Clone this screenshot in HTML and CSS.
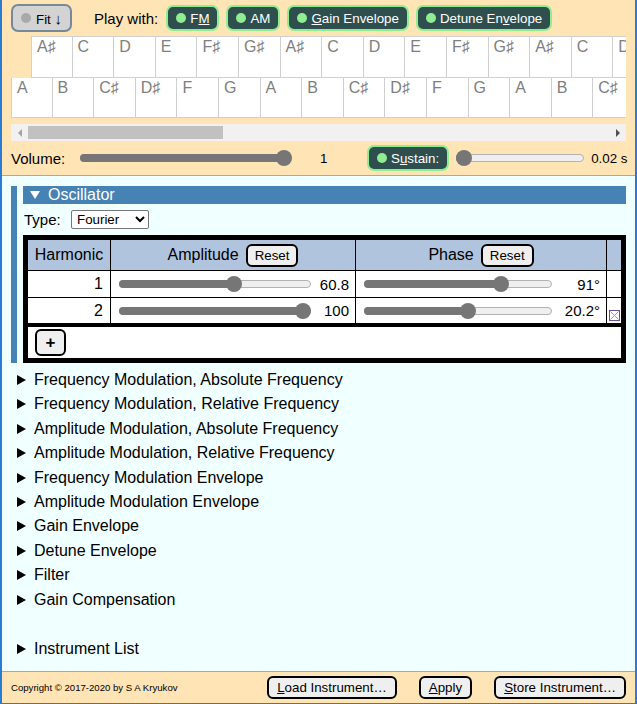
FILE: index.html
```html
<!DOCTYPE html>
<html lang="en">
<head>
<meta charset="utf-8">
<title>Synthesizer</title>
<link rel="stylesheet" href="styles.css">
</head>
<body>
<div class="app">
  <header class="top-panel">
    <div class="toolbar">
      <button class="btn-fit"><span class="led led-off"></span><span class="lbl">Fit <span class="arrow">↓</span></span></button>
      <span class="play-label">Play with:</span>
      <button class="toggle"><span class="led"></span><span class="lbl">F<u>M</u></span></button>
      <button class="toggle"><span class="led"></span><span class="lbl">AM</span></button>
      <button class="toggle"><span class="led"></span><span class="lbl"><u>G</u>ain Envelope</span></button>
      <button class="toggle"><span class="led"></span><span class="lbl">Detune En<u>v</u>elope</span></button>
    </div>
    <div class="keyboard">
      <div class="key-row row-upper">
        <div class="key">A♯</div><div class="key">C</div><div class="key">D</div><div class="key">E</div><div class="key">F♯</div><div class="key">G♯</div><div class="key">A♯</div><div class="key">C</div><div class="key">D</div><div class="key">E</div><div class="key">F♯</div><div class="key">G♯</div><div class="key">A♯</div><div class="key">C</div><div class="key">D</div><div class="key">E</div>
      </div>
      <div class="key-row row-lower">
        <div class="key">A</div><div class="key">B</div><div class="key">C♯</div><div class="key">D♯</div><div class="key">F</div><div class="key">G</div><div class="key">A</div><div class="key">B</div><div class="key">C♯</div><div class="key">D♯</div><div class="key">F</div><div class="key">G</div><div class="key">A</div><div class="key">B</div><div class="key">C♯</div><div class="key">D♯</div>
      </div>
    </div>
    <div class="hscroll">
      <span class="hs-btn"><span class="hs-arrow hs-left"></span></span>
      <div class="hs-track"><div class="hs-thumb"></div></div>
      <span class="hs-btn"><span class="hs-arrow hs-right"></span></span>
    </div>
    <div class="volume-row">
      <span class="vol-label">Volume:</span>
      <div class="slider vol-slider" style="--v:1"><div class="slider-fill"></div><div class="slider-thumb"></div></div>
      <span class="vol-value">1</span>
      <button class="toggle sustain"><span class="led"></span><span class="lbl">S<u>u</u>stain:</span></button>
      <div class="slider sus-slider" style="--v:0"><div class="slider-fill"></div><div class="slider-thumb"></div></div>
      <span class="sus-value">0.02 s</span>
    </div>
  </header>

  <main class="content">
    <details class="osc" open>
      <summary class="osc-summary"><span class="tri-down"></span>Oscillator</summary>
      <div class="type-row">
        <label class="type-label">Type:</label>
        <select class="type-select"><option>Fourier</option></select>
      </div>
      <div class="harm-table">
        <div class="cell head">Harmonic</div>
        <div class="cell head">Amplitude <button class="btn btn-reset">Reset</button></div>
        <div class="cell head">Phase <button class="btn btn-reset">Reset</button></div>
        <div class="cell head last-col"></div>

        <div class="cell row num">1</div>
        <div class="cell row ctl ctl-amp"><div class="slider" style="--v:0.608"><div class="slider-fill"></div><div class="slider-thumb"></div></div><span class="val">60.8</span></div>
        <div class="cell row ctl ctl-phase"><div class="slider" style="--v:0.7528"><div class="slider-fill"></div><div class="slider-thumb"></div></div><span class="val">91°</span></div>
        <div class="cell row last-col"></div>

        <div class="cell row row-last num">2</div>
        <div class="cell row row-last ctl ctl-amp"><div class="slider" style="--v:1"><div class="slider-fill"></div><div class="slider-thumb"></div></div><span class="val">100</span></div>
        <div class="cell row row-last ctl ctl-phase"><div class="slider" style="--v:0.5561"><div class="slider-fill"></div><div class="slider-thumb"></div></div><span class="val">20.2°</span></div>
        <div class="cell row row-last last-col del-cell"><svg class="del-icon" width="11" height="11" viewBox="0 0 11 11"><path d="M1.5 1.5 L9.5 9.5 M9.5 1.5 L1.5 9.5" stroke="#8a9cc4" stroke-width="1"/><rect x="0.5" y="0.5" width="10" height="10" fill="none" stroke="#6a4f9a" stroke-width="1"/></svg></div>

        <div class="cell foot"><button class="btn btn-add">+</button></div>
      </div>
    </details>

    <details class="item"><summary><span class="tri-right"></span>Frequency Modulation, Absolute Frequency</summary></details>
    <details class="item"><summary><span class="tri-right"></span>Frequency Modulation, Relative Frequency</summary></details>
    <details class="item"><summary><span class="tri-right"></span>Amplitude Modulation, Absolute Frequency</summary></details>
    <details class="item"><summary><span class="tri-right"></span>Amplitude Modulation, Relative Frequency</summary></details>
    <details class="item"><summary><span class="tri-right"></span>Frequency Modulation Envelope</summary></details>
    <details class="item"><summary><span class="tri-right"></span>Amplitude Modulation Envelope</summary></details>
    <details class="item"><summary><span class="tri-right"></span>Gain Envelope</summary></details>
    <details class="item"><summary><span class="tri-right"></span>Detune Envelope</summary></details>
    <details class="item"><summary><span class="tri-right"></span>Filter</summary></details>
    <details class="item"><summary><span class="tri-right"></span>Gain Compensation</summary></details>
    <details class="item item-spaced"><summary><span class="tri-right"></span>Instrument List</summary></details>
  </main>

  <footer class="bottom-panel">
    <span class="copyright">Copyright © 2017-2020 by S A Kryukov</span>
    <div class="footer-buttons">
      <button class="btn btn-foot"><u>L</u>oad Instrument…</button>
      <button class="btn btn-foot"><u>A</u>pply</button>
      <button class="btn btn-foot"><u>S</u>tore Instrument…</button>
    </div>
  </footer>
</div>
</body>
</html>
```

FILE: styles.css
```css
* { box-sizing: border-box; }

html, body {
  margin: 0;
  height: 100%;
}

body {
  font-family: "Liberation Sans", Arial, sans-serif;
  font-size: 16px;
  color: #000;
  background: #f0ffff;
  overflow: hidden;
}

.app {
  height: 704px;
  display: flex;
  flex-direction: column;
  border-left: 2px solid #2a7bd3;
  border-right: 2px solid #2a7bd3;
  border-bottom: 1px solid #2a7bd3;
}

/* ---------- top panel ---------- */
.top-panel {
  background: #ffe4b5;
  padding: 4px 9px 4px 9px;
  border-bottom: 1px solid #a8a8a8;
  flex: none;
}

button {
  font-family: inherit;
  font-size: 13.333px;
  color: inherit;
  cursor: pointer;
  white-space: nowrap;
}

.lbl { white-space: nowrap; }

.toolbar {
  display: flex;
  align-items: center;
  height: 28px;
}

.led {
  flex: none;
  width: 10px;
  height: 10px;
  border-radius: 50%;
  background: #90ee90;
}

.led-off { background: #a9a9a9; }

.btn-fit {
  flex: none;
  height: 28px;
  display: flex;
  align-items: center;
  gap: 5px;
  padding: 0 8px;
  background: #d3d3d3;
  border: 2px solid #778899;
  border-radius: 7px;
}

.btn-fit .arrow {
  font-size: 15px;
}

.play-label {
  flex: none;
  margin-left: 22px;
  margin-right: 8px;
  font-size: 15px;
}

.toggle {
  flex: none;
  height: 26px;
  display: flex;
  align-items: center;
  gap: 4px;
  padding: 0 8px;
  background: #2f4f4f;
  color: #fff;
  border: 2px solid #90ee90;
  border-radius: 7px;
  margin-right: 7px;
}

/* keyboard */
.keyboard {
  margin-top: 4px;
  overflow: hidden;
}

.key-row {
  display: flex;
}

.row-upper { padding-left: 20px; }

.key {
  flex: none;
  width: 41.6px;
  background: #fff;
  border-right: 1px solid #d0d0d0;
  border-bottom: 1px solid #d0d0d0;
  color: #808080;
  font-size: 16px;
  line-height: 18px;
  padding: 1px 5px;
  white-space: nowrap;
}

.key:first-child { border-left: 1px solid #d0d0d0; }

.row-upper .key {
  height: 42px;
  border-top: 1px solid #d0d0d0;
}

.row-lower .key { height: 40px; }

/* horizontal scrollbar */
.hscroll {
  margin-top: 6px;
  height: 17px;
  display: flex;
  background: #f1f1f1;
}

.hs-btn {
  flex: none;
  width: 17px;
  display: flex;
  align-items: center;
  justify-content: center;
}

.hs-arrow {
  width: 0;
  height: 0;
  border-top: 4px solid transparent;
  border-bottom: 4px solid transparent;
}

.hs-left { border-right: 4px solid #a3a3a3; }
.hs-right { border-left: 4px solid #505050; }

.hs-track {
  flex: 1;
  padding: 2px 0;
}

.hs-thumb {
  width: 195px;
  height: 13px;
  background: #c1c1c1;
}

/* volume row */
.volume-row {
  margin-top: 4px;
  height: 26px;
  display: flex;
  align-items: center;
  white-space: nowrap;
}

.volume-row > * { flex: none; }

.vol-label {
  width: 69px;
  font-size: 15px;
}

.vol-slider { width: 212px; }

.vol-value {
  width: 75px;
  padding-left: 28px;
  font-size: 13.333px;
}

.sustain { margin-right: 0; }

.sus-slider {
  width: 128px;
  margin-left: 7px;
}

.sus-value {
  margin-left: 7px;
  font-size: 13.333px;
}

/* slider */
.slider {
  position: relative;
  height: 8px;
  border-radius: 4px;
  background: #efefef;
  border: 1px solid #b2b2b2;
  flex: none;
}

.slider-fill {
  position: absolute;
  left: -1px;
  top: -1px;
  bottom: -1px;
  width: calc((100% - 14px) * var(--v) + 8px);
  background: #767676;
  border-radius: 4px;
}

.slider-thumb {
  position: absolute;
  top: 50%;
  width: 16px;
  height: 16px;
  margin-top: -8px;
  left: calc((100% - 14px) * var(--v) - 1px);
  border-radius: 50%;
  background: #767676;
}

/* ---------- content ---------- */
.content {
  flex: 1;
  padding: 10px 9px 0 9px;
  background: #f0ffff;
  overflow: hidden;
}

details > summary {
  display: block;
  list-style: none;
  cursor: pointer;
}

details > summary::-webkit-details-marker { display: none; }

.osc {
  border-left: 6px solid #4682b4;
  padding-left: 6px;
}

.osc-summary {
  background: #4682b4;
  color: #fff;
  height: 18px;
  line-height: 18px;
  padding-left: 7px;
}

.tri-down {
  display: inline-block;
  width: 0;
  height: 0;
  border-top: 8px solid #fff;
  border-left: 5px solid transparent;
  border-right: 5px solid transparent;
  margin-right: 8px;
  vertical-align: 1px;
}

.type-row {
  margin-top: 5px;
  height: 20px;
  display: flex;
  align-items: center;
  padding-left: 1px;
}

.type-label {
  font-size: 15px;
  width: 47px;
}

.type-select {
  width: 78px;
  height: 19px;
  font-family: inherit;
  font-size: 13.333px;
  background: #fff;
  border: 1px solid #767676;
  border-radius: 2px;
  padding: 0 1px;
}

/* harmonics table */
.harm-table {
  margin-top: 6px;
  display: grid;
  grid-template-columns: 83px 245px 251px 1fr;
  border: 5px solid #000;
  background: #fff;
}

.cell {
  display: flex;
  align-items: center;
  border-right: 1px solid #000;
  border-bottom: 1px solid #000;
  background: #fff;
}

.last-col { border-right: none; }

.head {
  height: 31px;
  background: #b0c4de;
  justify-content: center;
  gap: 7px;
}

.row { height: 27px; }

.row-last {
  height: 29px;
  border-bottom-width: 4px;
}

.num {
  justify-content: flex-end;
  padding-right: 7px;
}

.ctl { padding: 0 6px 0 8px; }

.ctl .slider { flex: 1; }

.val {
  flex: none;
  text-align: right;
  font-size: 15px;
}

.ctl-amp .val { width: 38px; }
.ctl-phase .val { width: 48px; }

.del-cell {
  justify-content: center;
  align-items: flex-end;
  padding-bottom: 2px;
}

.del-icon { display: block; }

.foot {
  grid-column: 1 / -1;
  height: 31px;
  border: none;
  padding-left: 7px;
}

.btn {
  background: #efefef;
  border: 2px solid #000;
  border-radius: 6px;
  height: 23px;
  padding: 0 7px;
  font-size: 13.333px;
}

.btn-add {
  width: 31px;
  height: 27px;
  padding: 0;
  font-size: 17px;
  font-weight: bold;
}

/* collapsed sections */
.item { margin-top: 6px; }

.osc + .item { margin-top: 8px; }

.item > summary {
  padding-left: 6px;
  line-height: 18.4px;
}

.tri-right {
  display: inline-block;
  width: 0;
  height: 0;
  border-left: 9px solid #000;
  border-top: 5px solid transparent;
  border-bottom: 5px solid transparent;
  margin-right: 8px;
  vertical-align: 0;
}

.item-spaced { margin-top: 31px; }

/* ---------- footer ---------- */
.bottom-panel {
  flex: none;
  height: 32px;
  background: #ffe4b5;
  border-top: 1px solid #a8a8a8;
  display: flex;
  align-items: center;
  padding: 0 9px 0 9px;
}

.copyright { font-size: 9.6px; }

.footer-buttons {
  margin-left: auto;
  display: flex;
  gap: 22px;
}

.btn-foot { padding: 0 8px; }
```
